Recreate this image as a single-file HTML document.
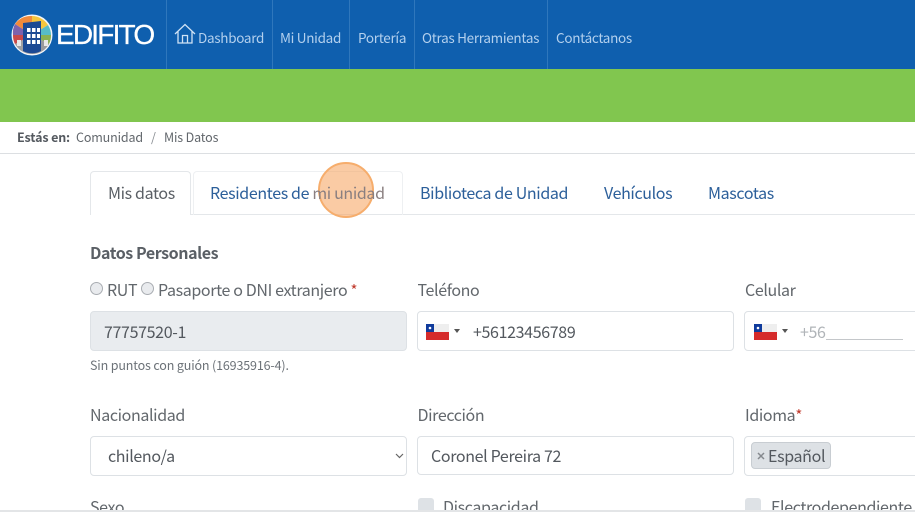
<!DOCTYPE html>
<html lang="es"><head><meta charset="utf-8"><title>Mis Datos</title>
<style>
html,body{margin:0;padding:0;height:512px;overflow:hidden}
body{width:915px;height:512px;position:relative;overflow:hidden;background:#fff;font-family:"Noto Sans CJK JP","Liberation Sans",sans-serif;color:#5a5f65}
.a{position:absolute;white-space:nowrap}
.nav{color:#b3d0ee;font-size:13.5px;line-height:20px;top:27px;letter-spacing:-.3px}
.sep{position:absolute;top:0;width:1px;height:69px;background:#2f77bc}
.lbl{font-size:16px;line-height:22px;color:#62676c;letter-spacing:-.37px}
.box{position:absolute;height:38px;border:1px solid #dde1e5;border-radius:4px;background:#fff;box-sizing:content-box}
.val{font-size:16px;line-height:22px;color:#53585e;letter-spacing:-.35px}
.tab{font-size:16px;line-height:22px;color:#2c5f9a;top:181px;letter-spacing:-.36px}
.star{color:#c0392b;font-size:15px}
.radio{position:absolute;width:11px;height:11px;border-radius:50%;background:#e9ebee;border:1px solid #a9adb2}
.chk{position:absolute;width:16px;height:16px;border-radius:3px;background:#dee2e6;top:498px}
.sm{font-size:12.5px;line-height:18px;letter-spacing:-.15px}
</style></head><body>
<div class="a" style="left:0;top:0;width:915px;height:70px;background:#0f5fae"></div>
<div class="a" style="left:0;top:69px;width:915px;height:53px;background:#81c64f"></div>

<svg class="a" style="left:11px;top:14px" width="42" height="42" viewBox="0 0 42 42">
<circle cx="21" cy="21" r="20.5" fill="#f2f5f8"/>
<path d="M21 21L4 10A19 19 0 0 1 21 2Z" fill="#f08a3c"/>
<path d="M21 21V2A19 19 0 0 1 37 11Z" fill="#f6c63d"/>
<path d="M21 21L37 11A19 19 0 0 1 40 21Z" fill="#58bcc8"/>
<path d="M21 21H40A19 19 0 0 1 38 30Z" fill="#8cb153"/>
<path d="M21 21L38 30A19 19 0 0 1 21 40Z" fill="#9a9a9c"/>
<path d="M21 21V40A19 19 0 0 1 4 30Z" fill="#a0a0a2"/>
<path d="M21 21L4 30A19 19 0 0 1 2 21Z" fill="#c94a4a"/>
<path d="M21 21H2A19 19 0 0 1 4 10Z" fill="#7d62ad"/>
<path d="M12 9L30 7V37A19 19 0 0 1 12 37Z" fill="#1c4a94"/>
<g fill="#fff"><rect x="16" y="14" width="3.5" height="4"/><rect x="21" y="14" width="3.5" height="4"/><rect x="26" y="14" width="3" height="4"/><rect x="16" y="20" width="3.5" height="4"/><rect x="21" y="20" width="3.5" height="4"/><rect x="26" y="20" width="3" height="4"/><rect x="16" y="26" width="3.5" height="4"/><rect x="21" y="26" width="3.5" height="4"/><rect x="26" y="26" width="3" height="4"/></g>
<g fill="#e8e8e8"><rect x="6" y="26" width="4" height="6"/><rect x="33" y="26" width="4" height="6"/></g>
</svg>
<div class="a" style="left:56px;top:16px;font-size:28px;line-height:38px;color:#fff;letter-spacing:-1.8px;-webkit-text-stroke:.3px #fff;font-family:'Liberation Sans',sans-serif">EDIFITO</div>

<div class="sep" style="left:166px"></div><div class="sep" style="left:272px"></div><div class="sep" style="left:349px"></div><div class="sep" style="left:414px"></div><div class="sep" style="left:547px"></div>
<svg class="a" style="left:174px;top:23px" width="22" height="21" viewBox="0 0 22 21" fill="none" stroke="#cfe2f5" stroke-width="1.3"><path d="M1 11L11 1.5 21 11M4 8.5V20H18V8.5M8.5 20V12.5H13.5V20"/></svg>
<div class="a nav" style="left:198px">Dashboard</div>
<div class="a nav" style="left:280px">Mi Unidad</div>
<div class="a nav" style="left:358px">Portería</div>
<div class="a nav" style="left:422px">Otras Herramientas</div>
<div class="a nav" style="left:556px">Contáctanos</div>

<div class="a sm" style="left:17px;top:128px;font-weight:700;color:#54595f">Estás en:</div>
<div class="a sm" style="left:76px;top:128px;color:#62676c">Comunidad</div>
<div class="a sm" style="left:151px;top:128px;color:#8a8e93">/</div>
<div class="a sm" style="left:164px;top:128px;color:#62676c">Mis Datos</div>
<div class="a" style="left:0;top:153px;width:915px;height:1px;background:#dcdfe2"></div>

<div class="a" style="left:90px;top:214px;width:825px;height:1px;background:#e4e7ea"></div>
<div class="a" style="left:90px;top:171px;width:101px;height:44px;background:#fff;border:1px solid #e4e7ea;border-bottom:0;border-radius:4px 4px 0 0;box-sizing:border-box"></div>
<div class="a" style="left:193px;top:171px;width:210px;height:44px;border:1px solid #eef0f2;border-bottom:0;border-radius:4px 4px 0 0;box-sizing:border-box"></div>
<div class="a" style="left:318px;top:162px;width:56px;height:56px;box-sizing:border-box;border-radius:50%;background:rgba(246,160,90,.55);border:2px solid #f6ad6c"></div>
<div class="a tab" style="left:108px;color:#5a5f65">Mis datos</div>
<div class="a tab" style="left:210px">Residentes de <span style="color:#8a7f80">mi unidad</span></div>
<div class="a tab" style="left:420px">Biblioteca de Unidad</div>
<div class="a tab" style="left:604px">Vehículos</div>
<div class="a tab" style="left:708px">Mascotas</div>

<div class="a" style="left:90px;top:241px;font-size:16px;line-height:22px;font-weight:700;color:#5a5f65;letter-spacing:-.42px">Datos Personales</div>

<div class="radio" style="left:90px;top:282px"></div>
<div class="a lbl" style="left:107px;top:278px">RUT</div>
<div class="radio" style="left:141px;top:282px"></div>
<div class="a lbl" style="left:158px;top:278px">Pasaporte o DNI extranjero <span class="star">*</span></div>
<div class="a lbl" style="left:417.5px;top:278px">Teléfono</div>
<div class="a lbl" style="left:745px;top:278px">Celular</div>

<div class="box" style="left:90px;top:311px;width:315px;background:#e9ecef"></div>
<div class="a val" style="left:104px;top:320px">77757520-1</div>
<div class="a sm" style="left:90px;top:356px;color:#6c7278">Sin puntos con guión (16935916-4).</div>

<div class="box" style="left:417px;top:311px;width:315px"></div>
<svg class="a" style="left:426px;top:324px" width="23" height="16" viewBox="0 0 23 16"><rect width="23" height="16" fill="#eee"/><rect y="8" width="23" height="8" fill="#d52b2b"/><rect width="8" height="8" fill="#0f3b9c"/><circle cx="4" cy="4" r="1.3" fill="#fff"/></svg>
<div class="a" style="left:454px;top:329px;width:0;height:0;border:3px solid transparent;border-top:4px solid #555;border-bottom:0"></div>
<div class="a val" style="left:473px;top:320px">+56123456789</div>

<div class="box" style="left:744px;top:311px;width:200px"></div>
<svg class="a" style="left:754px;top:324px" width="23" height="16" viewBox="0 0 23 16"><rect width="23" height="16" fill="#eee"/><rect y="8" width="23" height="8" fill="#d52b2b"/><rect width="8" height="8" fill="#0f3b9c"/><circle cx="4" cy="4" r="1.3" fill="#fff"/></svg>
<div class="a" style="left:782px;top:329px;width:0;height:0;border:3px solid transparent;border-top:4px solid #555;border-bottom:0"></div>
<div class="a val" style="left:800px;top:320px;color:#b0b4b8">+56</div>
<div class="a" style="left:826px;top:339px;width:77px;height:1px;background:#c4c7ca"></div>

<div class="a lbl" style="left:90px;top:402.5px">Nacionalidad</div>
<div class="a lbl" style="left:417.5px;top:402.5px">Dirección</div>
<div class="a lbl" style="left:745px;top:402.5px">Idioma<span class="star">*</span></div>

<div class="box" style="left:90px;top:436px;width:315px"></div>
<div class="a val" style="left:108px;top:444px">chileno/a</div>
<svg class="a" style="left:395px;top:453px" width="9" height="6" viewBox="0 0 9 6" fill="none" stroke="#666" stroke-width="1.2"><path d="M1 1L4.5 4.5 8 1"/></svg>

<div class="box" style="left:417px;top:436px;width:315px;height:37px"></div>
<div class="a val" style="left:431px;top:444px">Coronel Pereira 72</div>

<div class="box" style="left:744px;top:436px;width:200px"></div>
<div class="a" style="left:751px;top:442px;width:80px;height:27px;box-sizing:border-box;background:#dde1e5;border:1px solid #c8cdd2;border-radius:4px"></div>
<svg class="a" style="left:757px;top:452px" width="8" height="8" viewBox="0 0 8 8" fill="none" stroke="#85898e" stroke-width="1.5"><path d="M1 1L7 7M7 1L1 7"/></svg>
<div class="a val" style="left:768px;top:444px">Español</div>

<div class="a lbl" style="left:90px;top:495px">Sexo</div>
<div class="chk" style="left:418px"></div>
<div class="a lbl" style="left:443px;top:495px">Discapacidad</div>
<div class="chk" style="left:745px"></div>
<div class="a lbl" style="left:771px;top:495px">Electrodependiente</div>
<div class="a" style="left:0;top:510px;width:915px;height:2px;background:#e3e5e7"></div>
</body></html>
